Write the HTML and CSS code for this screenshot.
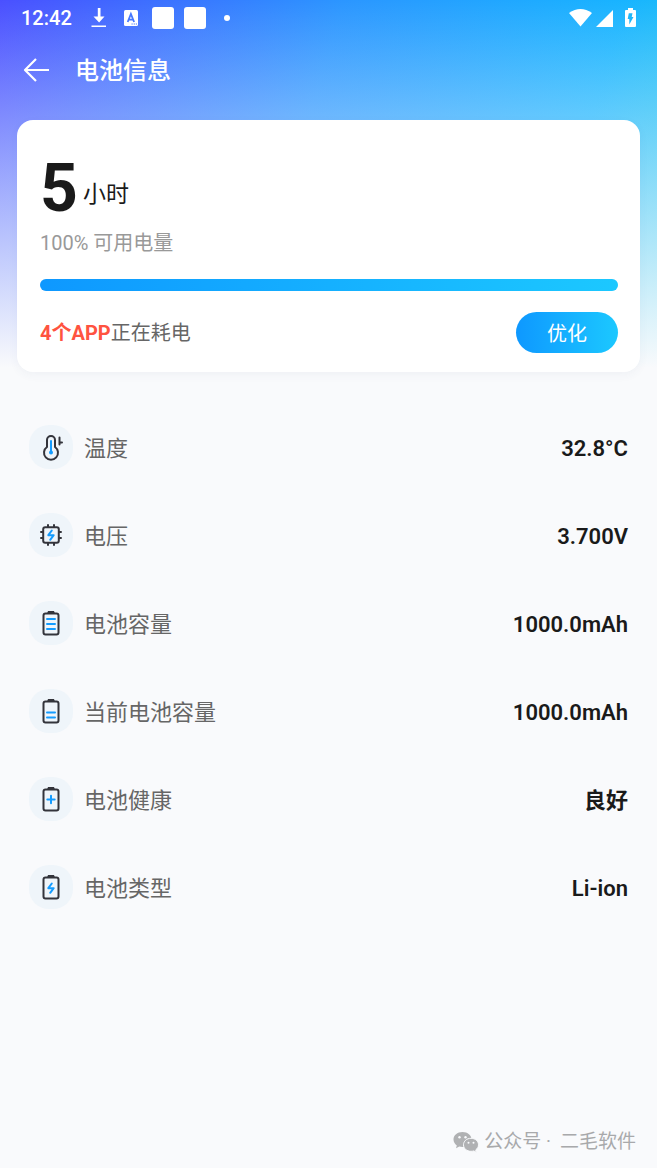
FILE: index.html
```html
<!DOCTYPE html>
<html lang="zh-CN">
<head>
<meta charset="utf-8">
<meta name="viewport" content="width=device-width, initial-scale=1">
<title>电池信息</title>
<link rel="stylesheet" href="styles.css">
</head>
<body>
<div class="screen">
  <div class="status">
    <span class="time">12:42</span>
    <div class="notices">
      <svg width="16" height="20" viewBox="0 0 16 20" aria-hidden="true"><path d="M6.800 0h2.700v8.500h4L8.100 14.500 2.500 8.500h4.300zM.500 17.500H15V19H.500z" fill="#fff"/></svg>
      <svg width="14" height="16" viewBox="0 0 14 16" aria-hidden="true"><rect width="14" height="16" rx="1.500" fill="#fff"/><path d="M3.700 12 6.900 4 10.100 12M5 9.600h3.900" fill="none" stroke="#4779ff" stroke-width="1.800"/><path d="M7.500 14h1.200M9.700 14h1.200M11.800 14h1.200" stroke="#4779ff"/></svg>
      <i class="block"></i>
      <i class="block"></i>
      <i class="dot"></i>
    </div>
    <div class="system">
      <svg width="23" height="18" viewBox="0 0 23 18" aria-hidden="true"><path d="M0 4Q11.500-3.800 23 4L11.500 17.500z" fill="#fff"/></svg>
      <svg width="17" height="18" viewBox="0 0 17 18" aria-hidden="true"><path d="M17 1v17H0z" fill="#fff"/></svg>
      <svg class="charge" width="11" height="20" viewBox="0 0 11 20" aria-hidden="true"><path d="M3 0h5v2h2q1 0 1 1v15q0 1-1 1H1q-1 0-1-1V3q0-1 1-1h2z" fill="#fff"/><path d="M3.800 5.300h3.700L6.700 9h1.800L4.300 16.500V11H2.700z" fill="#1fb6f9"/></svg>
    </div>
  </div>

  <header class="bar">
    <button class="back" type="button" aria-label="返回">
      <svg width="26" height="26" viewBox="0 0 26 26" aria-hidden="true"><path d="M13 2 2 13l11 11M2 13h24" fill="none" stroke="#fff" stroke-width="2.200" stroke-linejoin="round"/></svg>
    </button>
    <h1 class="title">电池信息</h1>
  </header>

  <main>
    <section class="card">
      <p class="remain"><strong class="hours">5</strong><span class="unit">小时</span></p>
      <p class="percent">100% 可用电量</p>
      <div class="meter" role="progressbar" aria-label="可用电量" aria-valuenow="100" aria-valuemin="0" aria-valuemax="100"><div class="level" style="width:100%"></div></div>
      <div class="usage">
        <p class="apps"><strong>4个APP</strong>正在耗电</p>
        <button class="optimize" type="button">优化</button>
      </div>
    </section>

    <dl class="list">
      <div class="row">
        <dt><span class="icon"><svg width="24" height="28" viewBox="0 0 24 28" aria-hidden="true"><path d="M8 14V7a4 4 0 0 1 8 0v7a7 7 0 1 1-8 0z" class="line"/><path d="M12 8v11" class="accent"/><circle cx="12" cy="19.500" r="2" fill="#149cff"/><path d="M20.500 4.500v7M20.500 9.500h2.500" class="line"/></svg></span><span>温度</span></dt>
        <dd>32.8°C</dd>
      </div>
      <div class="row">
        <dt><span class="icon"><svg width="24" height="28" viewBox="0 0 24 28" aria-hidden="true"><rect x="4.200" y="6.200" width="15.600" height="15.600" rx="2" class="line"/><path d="M9 5.500V4M15 5.500V4M9 22.500V24M15 22.500V24M3.500 11H2M3.500 17H2M20.500 11H22M20.500 17H22" class="line"/><path d="M12.800 9.500 9.300 14.200h5.400L11.200 18.800" class="accent"/></svg></span><span>电压</span></dt>
        <dd>3.700V</dd>
      </div>
      <div class="row">
        <dt><span class="icon"><svg width="24" height="28" viewBox="0 0 24 28" aria-hidden="true"><rect x="4.500" y="4.500" width="15" height="21" rx="2" class="line"/><path d="M9 2h6l1 2.500H8z" class="cap"/><path d="M8 10h8M8 15h8M8 20h8" class="accent"/></svg></span><span>电池容量</span></dt>
        <dd>1000.0mAh</dd>
      </div>
      <div class="row">
        <dt><span class="icon"><svg width="24" height="28" viewBox="0 0 24 28" aria-hidden="true"><rect x="4.500" y="4.500" width="15" height="21" rx="2" class="line"/><path d="M9 2h6l1 2.500H8z" class="cap"/><path d="M8 15.500h8M8 20.500h8" class="accent"/></svg></span><span>当前电池容量</span></dt>
        <dd>1000.0mAh</dd>
      </div>
      <div class="row">
        <dt><span class="icon"><svg width="24" height="28" viewBox="0 0 24 28" aria-hidden="true"><rect x="4.500" y="4.500" width="15" height="21" rx="2" class="line"/><path d="M9 2h6l1 2.500H8z" class="cap"/><path d="M8.300 14.500h7.400M12 10.800v7.400" class="accent"/></svg></span><span>电池健康</span></dt>
        <dd>良好</dd>
      </div>
      <div class="row">
        <dt><span class="icon"><svg width="24" height="28" viewBox="0 0 24 28" aria-hidden="true"><rect x="4.500" y="4.500" width="15" height="21" rx="2" class="line"/><path d="M9 2h6l1 2.500H8z" class="cap"/><path d="M12.800 10.500 9.300 15.200h5.400L11.200 19.800" class="accent"/></svg></span><span>电池类型</span></dt>
        <dd>Li-ion</dd>
      </div>
    </dl>
  </main>

  <footer class="source">
    <svg width="26" height="22" viewBox="0 0 26 22" aria-hidden="true">
      <path d="M9.500 1C4.300 1 .5 4.300.5 8.500c0 2.500 1.300 4.500 3.300 5.900L3 17.200l3.300-1.700c1 .3 2 .5 3.200.5C14.700 16 18.500 12.700 18.500 8.500S14.700 1 9.500 1z" fill="#b0b1b3"/>
      <path d="M18 7.300c-4.300 0-7.500 2.900-7.500 6.500s3.200 6.500 7.500 6.500c1 0 1.900-.1 2.700-.4l2.700 1.400-.7-2.400c1.700-1.200 2.800-3 2.800-5.100 0-3.600-3.200-6.500-7.500-6.500z" fill="#b0b1b3" stroke="#f9fafc" stroke-width="1"/>
      <g fill="#f9fafc"><circle cx="6.500" cy="6.300" r="1.200"/><circle cx="12.500" cy="6.300" r="1.200"/><circle cx="15.500" cy="11.800" r="1"/><circle cx="20.500" cy="11.800" r="1"/></g>
    </svg>
    <span>公众号 ·</span><span>二毛软件</span>
  </footer>
</div>
</body>
</html>
```
FILE: styles.css
```css
* { box-sizing: border-box; }

body {
  margin: 0;
  background: #f9fafc;
  color: #1a1a1a;
  font-family: Roboto, "Noto Sans CJK SC", sans-serif;
}

h1, p, dl, dd { margin: 0; }
svg { display: block; flex: none; }
button { padding: 0; border: 0; font: inherit; cursor: pointer; }

.screen {
  display: flex;
  flex-direction: column;
  min-height: 100vh;
  background:
    linear-gradient(180deg, rgba(249, 250, 252, 0) 0, rgba(249, 250, 252, 0.3) 110px, #f9fafc 368px),
    linear-gradient(106deg, #4a50ff 0, #2b96ff 45%, #18b4ff 82%, #22c6ee 100%) 0 0 / 100% 368px no-repeat;
}

main { flex: 1; }

.status {
  display: flex;
  align-items: center;
  height: 36px;
  padding: 0 21px;
  color: #fff;
}
.time { font-size: 20px; font-weight: 500; }
.notices { display: flex; align-items: center; gap: 12px; margin-left: 19px; }
.notices svg + svg { margin: 0 2px 0 5px; }
.block { width: 22px; height: 22px; border-radius: 3px; background: #fff; }
.block + .block { margin-left: -2px; }
.dot { width: 6px; height: 6px; margin-left: 6px; border-radius: 50%; background: #fff; }
.system { display: flex; align-items: center; gap: 4px; margin-left: auto; }
.charge { margin-left: 8px; }

.bar {
  display: flex;
  align-items: center;
  gap: 26px;
  height: 68px;
  padding: 0 23px;
}
.back { background: none; }
.title { padding-top: 2px; color: #fff; font-size: 24px; font-weight: 500; line-height: 36px; }

.card {
  margin: 16px 17px 0;
  padding: 36px 22px 19px 23px;
  border-radius: 16px;
  background: #fff;
  box-shadow: 0 3px 10px rgba(60, 80, 110, 0.05);
}
.remain { display: flex; align-items: flex-end; gap: 5px; }
.hours { font-size: 66px; font-weight: 700; line-height: 66px; }
.unit { padding-bottom: 12px; font-size: 23px; line-height: 30px; }
.percent { margin-top: 6px; color: #999; font-size: 20px; line-height: 30px; }
.meter { height: 12px; margin-top: 21px; border-radius: 6px; background: #edf3f8; }
.level { height: 100%; border-radius: 6px; background: linear-gradient(90deg, #0e98ff, #1cc8ff); }
.usage { display: flex; align-items: center; justify-content: space-between; margin-top: 21px; }
.apps { color: #666; font-size: 20px; line-height: 30px; }
.apps strong { color: #ff5340; font-weight: 700; }
.optimize {
  width: 102px;
  height: 41px;
  border-radius: 21px;
  background: linear-gradient(90deg, #0e98ff, #1cc8ff);
  color: #fff;
  font-size: 20px;
}

.list { display: flex; flex-direction: column; gap: 44px; padding: 53px 29px 44px; }
.row { display: flex; align-items: center; justify-content: space-between; font-size: 22px; line-height: 30px; }
.row dt { display: flex; align-items: center; gap: 11px; color: #666; }
.row dd, .row dt span + span { padding-top: 3px; }
.row dd { font-weight: 600; }
.icon {
  display: flex;
  align-items: center;
  justify-content: center;
  width: 44px;
  height: 44px;
  border-radius: 20px;
  background: #eff5fa;
}
.line { fill: none; stroke: #33343b; stroke-width: 2; stroke-linecap: round; stroke-linejoin: round; }
.cap { fill: #33343b; }
.accent { fill: none; stroke: #149cff; stroke-width: 2; stroke-linecap: round; stroke-linejoin: round; }

.source {
  display: flex;
  align-items: center;
  justify-content: flex-end;
  gap: 5px;
  padding: 0 21px 11px;
  color: #a8a9ab;
  font-size: 19px;
  line-height: 30px;
}
.source span + span { margin-left: 4px; }
```
